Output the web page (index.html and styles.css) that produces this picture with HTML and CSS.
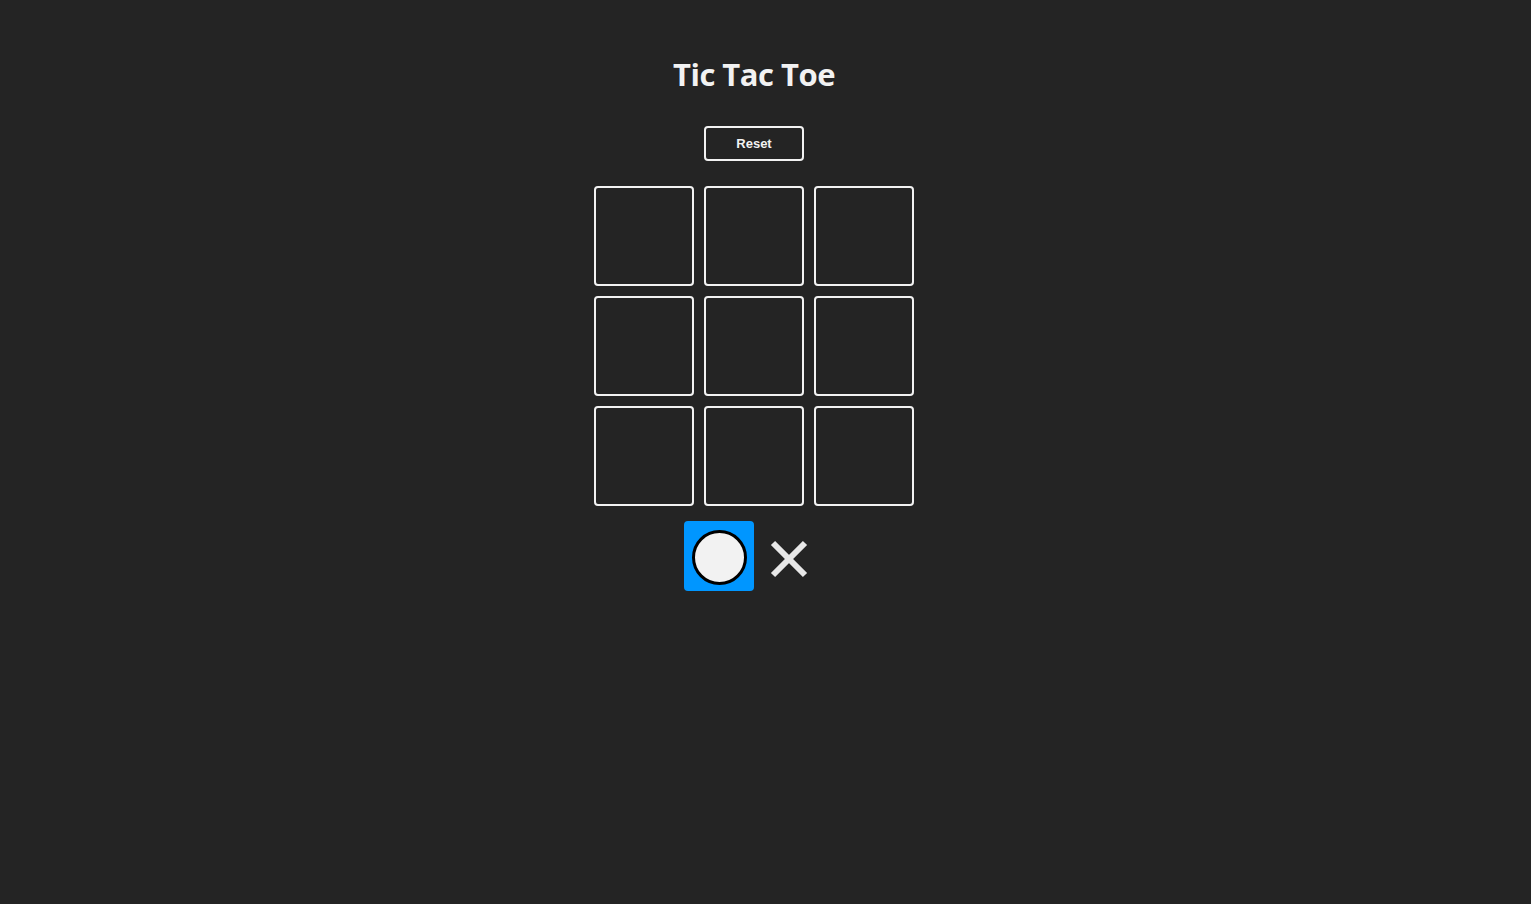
FILE: index.html
```html
<!DOCTYPE html>
<html lang="en">
<head>
<meta charset="utf-8">
<title>Tic Tac Toe</title>
<link rel="stylesheet" href="styles.css">
</head>
<body>
<div class="page">
  <h1 class="title">Tic Tac Toe</h1>
  <button class="reset">Reset</button>
  <div class="board">
    <div class="cell"></div><div class="cell"></div><div class="cell"></div>
    <div class="cell"></div><div class="cell"></div><div class="cell"></div>
    <div class="cell"></div><div class="cell"></div><div class="cell"></div>
  </div>
  <div class="turns">
    <div class="turn active"><span class="circle"></span></div>
    <div class="turn">
      <svg class="cross" width="38" height="38" viewBox="0 0 38 38">
        <line x1="3" y1="3" x2="35" y2="35" stroke="#e8e8e8" stroke-width="6"/>
        <line x1="35" y1="3" x2="3" y2="35" stroke="#e8e8e8" stroke-width="6"/>
      </svg>
    </div>
  </div>
</div>
</body>
</html>
```
FILE: styles.css
```css
html, body {
  margin: 0;
  padding: 0;
  background: #242424;
  height: 100%;
}
.page {
  width: 1508px;
  display: flex;
  flex-direction: column;
  align-items: center;
  font-family: "Open Sans", "Noto Sans", sans-serif;
  color: #f2f2f2;
}
.title {
  margin: 53px 0 0;
  font-size: 31px;
  letter-spacing: -0.5px;
  font-weight: 700;
  line-height: 43px;
  color: #f2f2f2;
}
.reset {
  margin-top: 30px;
  width: 100px;
  height: 35px;
  background: transparent;
  border: 2px solid #f2f2f2;
  border-radius: 4px;
  color: #f2f2f2;
  font-family: "Liberation Sans", Arial, sans-serif;
  font-weight: 700;
  font-size: 13px;
  padding: 0;
}
.board {
  margin-top: 25px;
  display: grid;
  grid-template-columns: repeat(3, 100px);
  grid-auto-rows: 100px;
  gap: 10px;
}
.cell {
  box-sizing: border-box;
  border: 2px solid #f2f2f2;
  border-radius: 4px;
}
.turns {
  margin-top: 15px;
  display: flex;
}
.turn {
  width: 70px;
  height: 70px;
  display: flex;
  align-items: center;
  justify-content: center;
  border-radius: 4px;
}
.turn.active {
  background: #0096ff;
}
.circle {
  box-sizing: border-box;
  width: 55px;
  height: 55px;
  margin-top: 3px;
  border-radius: 50%;
  border: 3px solid #000;
  background: #f2f2f2;
}
.cross {
  display: block;
  margin-top: 6px;
}
```
